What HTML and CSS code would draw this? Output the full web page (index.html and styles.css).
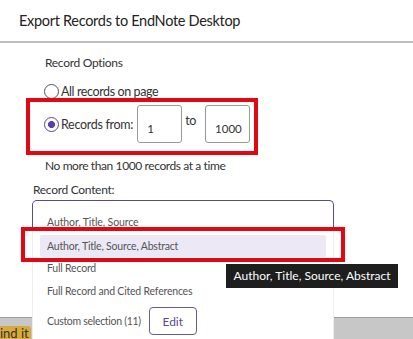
FILE: index.html
```html
<!DOCTYPE html>
<html lang="en">
  <head>
    <meta charset="UTF-8" />
    <title>Export Records to EndNote Desktop</title>
    <link rel="stylesheet" href="styles.css">
  </head>
  <body>
    <div class="dialog">
      <header class="dialog-title">Export Records to EndNote Desktop</header>

      <section class="dialog-body">
        <div class="group-label">Record Options</div>

        <label class="radio-row">
          <span class="radio"></span>
          <span>All records on page</span>
        </label>

        <div class="range-row">
          <span class="radio checked"></span>
          <span class="range-label">Records from:</span>
          <span class="num-box">1</span>
          <span class="to">to</span>
          <span class="num-box">1000</span>
          <span class="mark mark-range"></span>
        </div>

        <p class="note">No more than 1000 records at a time</p>

        <div class="content-label">Record Content:</div>

        <div class="select-wrap">
          <div class="select">Author, Title, Source</div>
          <ul class="menu">
            <li class="option active">Author, Title, Source, Abstract</li>
            <li class="option">Full Record</li>
            <li class="option">Full Record and Cited References</li>
            <li class="option custom">
              <span>Custom selection (11)</span>
              <button class="edit">Edit</button>
            </li>
          </ul>
          <span class="mark mark-option"></span>
          <div class="tooltip">Author, Title, Source, Abstract</div>
        </div>
      </section>
    </div>

    <div class="page-below">
      <span class="find">ind it</span>
    </div>
  </body>
</html>
```

FILE: styles.css
```css
body {
  margin: 0;
  font-family: Lato, "Liberation Sans", sans-serif;
  color: #333;
  background-color: #c7c7c7;
  overflow: hidden;
}
.dialog {
  background-color: #fff;
  height: 317px;
  border-bottom: 1px solid #9d9d9d;
}
.dialog-title {
  box-sizing: border-box;
  height: 43px;
  padding: 2px 0 0 19px;
  line-height: 38px;
  font-size: 14.5px;
  letter-spacing: -0.3px;
  color: #222;
  border-bottom: 2px solid #bdbdbd;
}
.dialog-body {
  position: relative;
  padding: 10px 0 0 45px;
  font-size: 12px;
  letter-spacing: -0.3px;
}
.group-label {
  line-height: 20px;
}
.radio-row {
  display: flex;
  align-items: center;
  gap: 2px;
  height: 20px;
  margin-top: 8px;
  margin-left: -1px;
  font-size: 12.5px;
  letter-spacing: -0.4px;
}
.radio {
  display: inline-block;
  box-sizing: border-box;
  width: 15px;
  height: 15px;
  border: 1px solid #555;
  border-radius: 50%;
}
.radio.checked {
  border: 1.5px solid #5b45a0;
  background: radial-gradient(circle, #5b3fa8 0 3.2px, #fff 3.8px);
}
.range-row {
  position: relative;
  display: flex;
  align-items: center;
  height: 38px;
  margin-top: 4px;
  margin-left: -1px;
  font-size: 12.5px;
}
.range-label {
  margin-left: 2px;
}
.num-box {
  box-sizing: border-box;
  width: 45px;
  height: 38px;
  margin-left: 4px;
  padding: 16px 0 0 9px;
  font-size: 11.5px;
  letter-spacing: 0;
  border: 1px solid #999;
  border-radius: 3px;
}
.to {
  margin: -8px 5px 0 3px;
}
.mark {
  position: absolute;
  border: 4px solid #e30613;
}
.mark-range {
  left: -18px;
  top: -7px;
  width: 224px;
  height: 49px;
}
.note {
  margin: 13px 0 0;
  line-height: 20px;
  font-size: 12px;
  letter-spacing: -0.4px;
}
.content-label {
  margin-left: -12px;
  margin-top: 4px;
  line-height: 20px;
}
.select-wrap {
  position: relative;
  margin-left: -13px;
  width: 302px;
}
.select {
  box-sizing: border-box;
  height: 28px;
  padding: 15px 0 0 14px;
  font-size: 10.5px;
  letter-spacing: -0.1px;
  color: #555;
  border: 1.5px solid #5d4a8c;
  border-bottom: none;
  border-radius: 5px 5px 0 0;
}
.menu {
  list-style: none;
  margin: 0;
  padding: 7px 7px 0 7px;
  background-color: #fff;
  border-left: 1px solid #eee;
  border-right: 1px solid #eee;
  height: 120px;
}
.option {
  height: 22px;
  padding-left: 7px;
  line-height: 22px;
  font-size: 10.5px;
  letter-spacing: -0.2px;
  color: #555;
}
.option.active {
  background-color: #ece8f5;
  border-radius: 2px;
}
.option + .option {
  margin-top: 1px;
}
.option.active + .option {
  margin-top: 0;
}
.option.custom {
  display: flex;
  align-items: center;
  gap: 8px;
  height: 28px;
  margin-top: 5px;
  letter-spacing: -0.3px;
}
.edit {
  width: 48px;
  height: 28px;
  font-family: inherit;
  font-size: 12px;
  color: #5d4a8c;
  background-color: #fff;
  border: 1.5px solid #6a5a9a;
  border-radius: 4px;
}
.mark-option {
  left: -11px;
  top: 27px;
  width: 316px;
  height: 27px;
}
.tooltip {
  position: absolute;
  left: 194px;
  top: 64px;
  width: 172px;
  height: 24px;
  line-height: 24px;
  text-align: center;
  font-size: 12px;
  letter-spacing: 0;
  color: #fff;
  background-color: #1e1e1e;
  white-space: nowrap;
}
.page-below {
  height: 22px;
  padding-top: 4px;
}
.find {
  display: inline-block;
  padding: 0 2px 0 0;
  font-size: 13px;
  line-height: 15px;
  color: #333;
  background-color: #d9a93a;
  border-radius: 0 3px 3px 0;
}
```
